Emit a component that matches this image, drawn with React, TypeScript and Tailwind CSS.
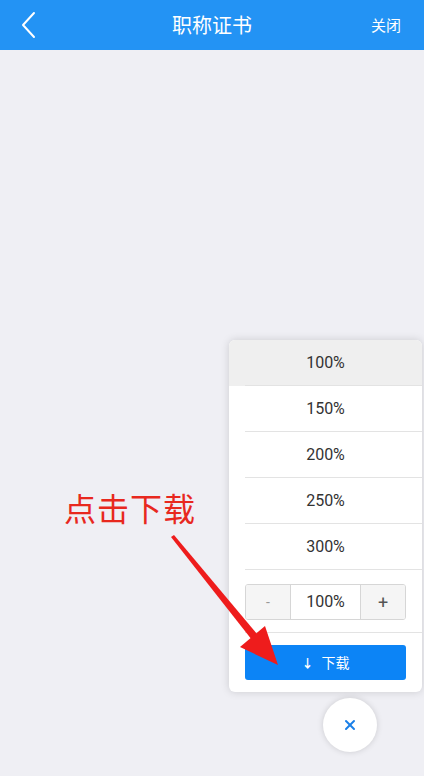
import { X } from 'lucide-react';

const cjk = { fontFamily: '"Noto Sans CJK SC", "Noto Sans", sans-serif' };
const latin = { fontFamily: 'Roboto, "Noto Sans CJK SC", sans-serif' };

const zooms = ['100%', '150%', '200%', '250%', '300%'];

export default function App() {
  return (
    <div className="relative w-[424px] h-[776px] bg-[#efeff4] overflow-hidden" style={cjk}>
      <header className="h-[50px] bg-[#2393f4] grid grid-cols-[80px_1fr_80px] items-center text-white">
        <svg className="ml-[20px]" width="16" height="28" viewBox="0 0 16 28" fill="none">
          <path d="M14 2 L3 14 L14 26" stroke="white" strokeWidth="2" strokeLinecap="round" strokeLinejoin="round" />
        </svg>
        <h1 className="text-[20px] text-center">职称证书</h1>
        <span className="text-[15px] text-right pr-[23px]">关闭</span>
      </header>

      {/* zoom popover */}
      <div className="absolute left-[229px] top-[340px] w-[193px] bg-white rounded-md shadow-[0_0_8px_rgba(0,0,0,0.15)] overflow-hidden" style={latin}>
        {zooms.map((z, i) => (
          <div key={z} className={i === 0 ? 'bg-[#efefef]' : ''}>
            <div className="h-[45px] flex items-center justify-center text-[16px] text-[#333]">{z}</div>
            <div className="ml-4 h-px bg-[#e3e3e3]" />
          </div>
        ))}
        <div className="px-4 pt-[14px] pb-[12px]">
          <div className="flex h-[36px] border border-[#d6d6d6] rounded-[3px] text-[#555] overflow-hidden">
            <div className="w-[44px] bg-[#f5f5f5] flex items-center justify-center text-[#999] text-[14px]">-</div>
            <div className="flex-1 border-x border-[#d6d6d6] flex items-center justify-center text-[16px] text-[#333]">100%</div>
            <div className="w-[44px] bg-[#f5f5f5] flex items-center justify-center text-[18px]">+</div>
          </div>
        </div>
        <div className="ml-4 h-px bg-[#e3e3e3]" />
        <div className="px-4 pt-[12px] pb-[12px]">
          <button className="w-full h-[35px] bg-[#0c84f6] rounded-[3px] text-white text-[14px] flex items-center justify-center gap-2" style={cjk}>
            <span className="font-bold text-[12px]">↓</span>
            <span>下载</span>
          </button>
        </div>
      </div>

      {/* close fab */}
      <div className="absolute left-[323px] top-[698px] w-[54px] h-[54px] rounded-full bg-white shadow-[0_0_6px_rgba(0,0,0,0.15)] flex items-center justify-center">
        <X className="w-4 h-4 text-[#1a7fe8]" strokeWidth={3} />
      </div>

      {/* annotation */}
      <div className="absolute left-[64px] top-[483px] text-[32px] text-[#e8281e] tracking-[1px]" style={cjk}>点击下载</div>
      <svg className="absolute left-0 top-0" width="424" height="776">
        <polygon points="171,537 174,535 257,634 252,640" fill="#ee1c1c" />
        <polygon points="278,665 240,647 265,626" fill="#ee1c1c" />
      </svg>
    </div>
  );
}
